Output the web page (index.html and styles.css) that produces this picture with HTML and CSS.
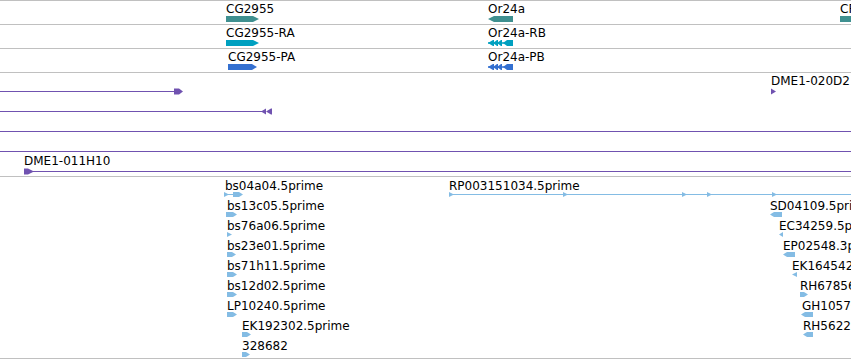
FILE: index.html
```html
<!DOCTYPE html>
<html lang="en">
<head>
  <meta charset="UTF-8">
  <title>Genome Browser Tracks</title>
  <link rel="stylesheet" href="styles.css">
</head>
<body>
  <div class="tracks">
    <!-- Genes -->
    <div class="track gene-track">
      <svg class="canvas" width="851" height="23">
        <text class="lbl" x="226" y="12">CG2955</text>
        <polygon class="gene" points="226,15 253,15 259,18 253,21 226,21"/>
        <text class="lbl" x="488" y="12">Or24a</text>
        <polygon class="gene" points="513,15 494,15 488,18 494,21 513,21"/>
        <text class="lbl" x="840" y="12">CR43229</text>
        <polygon class="gene" points="840,15 860,15 860,21 840,21"/>
      </svg>
    </div>

    <!-- Transcripts -->
    <div class="track">
      <svg class="canvas" width="851" height="23">
        <text class="lbl" x="226" y="12">CG2955-RA</text>
        <polygon class="rna" points="226,15 253,15 259,18 253,21 226,21"/>
        <text class="lbl" x="488" y="12">Or24a-RB</text>
        <g class="rna">
          <line class="intron" x1="488" y1="18" x2="506" y2="18"/>
          <polygon points="488,18 493,15 494,15 494,21 493,21"/>
          <polygon points="493,18 497,15 498,15 498,21 497,21"/>
          <polygon points="497,18 501,15 502,15 502,21 501,21"/>
          <polygon points="503,18 507,15 513,15 513,21 507,21"/>
        </g>
      </svg>
    </div>

    <!-- Proteins -->
    <div class="track">
      <svg class="canvas" width="851" height="23">
        <text class="lbl" x="228" y="12">CG2955-PA</text>
        <polygon class="prot" points="228,15 252,15 257,18 252,21 228,21"/>
        <text class="lbl" x="488" y="12">Or24a-PB</text>
        <g class="prot">
          <line class="intron" x1="488" y1="18" x2="506" y2="18"/>
          <polygon points="488,18 493,15 494,15 494,21 493,21"/>
          <polygon points="493,18 497,15 498,15 498,21 497,21"/>
          <polygon points="497,18 501,15 502,15 502,21 501,21"/>
          <polygon points="503,18 507,15 513,15 513,21 507,21"/>
        </g>
      </svg>
    </div>

    <!-- BAC clones -->
    <div class="track">
      <svg class="canvas" width="851" height="103">
        <g class="clone">
          <line x1="0" y1="18.5" x2="175" y2="18.5"/>
          <polygon points="174,15.5 179,15.5 183,18.5 179,21.5 174,21.5"/>
          <line x1="0" y1="38.5" x2="266" y2="38.5"/>
          <polygon points="261,38.5 266,35.5 266,38.5 271,35.5 272,35.5 272,41.5 271,41.5 266,38.5 266,41.5"/>
          <line x1="0" y1="58.5" x2="851" y2="58.5"/>
          <line x1="0" y1="78.5" x2="851" y2="78.5"/>
          <line x1="26" y1="98.5" x2="851" y2="98.5"/>
          <polygon points="24,95.5 28,95.5 34,98.5 28,101.5 24,101.5"/>
          <polygon points="771,15.5 776,18.5 771,21.5"/>
        </g>
        <text class="lbl" x="771" y="12">DME1-020D2</text>
        <text class="lbl" x="24" y="92">DME1-011H10</text>
      </svg>
    </div>

    <!-- ESTs -->
    <div class="track last">
      <svg class="canvas" width="851" height="181">
        <g class="est">
          <polygon points="224,15 229,17.5 224,20"/>
          <line x1="224" y1="17.5" x2="236" y2="17.5"/>
          <polygon points="233,15 239,15 243,17.5 239,20 233,20"/>
          <polygon points="226,35 233,35 237,37.5 233,40 226,40"/>
          <polygon points="227,55 232,57.5 227,60"/>
          <polygon points="227,75 232,75 236,77.5 232,80 227,80"/>
          <polygon points="227,95 233,95 237,97.5 233,100 227,100"/>
          <polygon points="227,115 233,115 237,117.5 233,120 227,120"/>
          <polygon points="227,135 233,135 237,137.5 233,140 227,140"/>
          <polygon points="242,155 247,155 251,157.5 247,160 242,160"/>
          <polygon points="242,175 246,175 250,177.5 246,180 242,180"/>

          <line x1="449" y1="17.5" x2="851" y2="17.5"/>
          <polygon points="449,15 454,17.5 449,20"/>
          <polygon points="563,15 568,17.5 563,20"/>
          <polygon points="682,15 687,17.5 682,20"/>
          <polygon points="707,15 712,17.5 707,20"/>
          <polygon points="772,15 777,17.5 772,20"/>

          <polygon points="770,37.5 774,35 782,35 782,40 774,40"/>
          <polygon points="779,57.5 783,55 783,60"/>
          <polygon points="783,77.5 787,75 795,75 795,80 787,80"/>
          <polygon points="792,97.5 797,95 797,100"/>
          <polygon points="800,115 804,115 808,117.5 804,120 800,120"/>
          <polygon points="801,137.5 805,135 813,135 813,140 805,140"/>
          <polygon points="803,157.5 807,155 813,155 813,160 807,160"/>
        </g>
        <text class="lbl" x="225" y="13">bs04a04.5prime</text>
        <text class="lbl" x="227" y="33">bs13c05.5prime</text>
        <text class="lbl" x="227" y="53">bs76a06.5prime</text>
        <text class="lbl" x="227" y="73">bs23e01.5prime</text>
        <text class="lbl" x="227" y="93">bs71h11.5prime</text>
        <text class="lbl" x="227" y="113">bs12d02.5prime</text>
        <text class="lbl" x="227" y="133">LP10240.5prime</text>
        <text class="lbl" x="242" y="153">EK192302.5prime</text>
        <text class="lbl" x="242" y="173">328682</text>

        <text class="lbl" x="449" y="13">RP003151034.5prime</text>
        <text class="lbl" x="770" y="33">SD04109.5prime</text>
        <text class="lbl" x="779" y="53">EC34259.5prime</text>
        <text class="lbl" x="783" y="73">EP02548.3prime</text>
        <text class="lbl" x="792" y="93">EK164542.5prime</text>
        <text class="lbl" x="800" y="113">RH67856.5prime</text>
        <text class="lbl" x="802" y="133">GH10576.5prime</text>
        <text class="lbl" x="803" y="153">RH56222.5prime</text>
      </svg>
    </div>
  </div>
</body>
</html>
```

FILE: styles.css
```css
/* Base */
* {
  box-sizing: border-box;
  margin: 0;
  padding: 0;
}
body {
  background: #fff;
  width: 851px;
  height: 360px;
  overflow: hidden;
  font-family: "DejaVu Sans", sans-serif;
}
/* Track rows */
.tracks {
  display: flex;
  flex-direction: column;
}
.track {
  border-top: 1px solid #c0c0c0;
}
.track.last {
  border-bottom: 1px solid #c0c0c0;
}
.canvas {
  display: block;
  overflow: hidden;
}
/* Feature labels */
.lbl {
  font-family: "DejaVu Sans", sans-serif;
  font-size: 12px;
  fill: #000;
}
/* Feature glyphs */
.gene {
  fill: #3f9090;
}
.rna {
  fill: #00a0c0;
  stroke: none;
}
.prot {
  fill: #3470d0;
  stroke: none;
}
.intron {
  stroke-width: 1.5;
}
.rna .intron {
  stroke: #00a0c0;
}
.prot .intron {
  stroke: #3470d0;
}
.clone {
  fill: #7052b0;
  stroke: none;
}
.clone line {
  stroke: #7052b0;
  stroke-width: 1;
}
.est {
  fill: #84bce4;
}
.est line {
  stroke: #84bce4;
  stroke-width: 1;
}
```
